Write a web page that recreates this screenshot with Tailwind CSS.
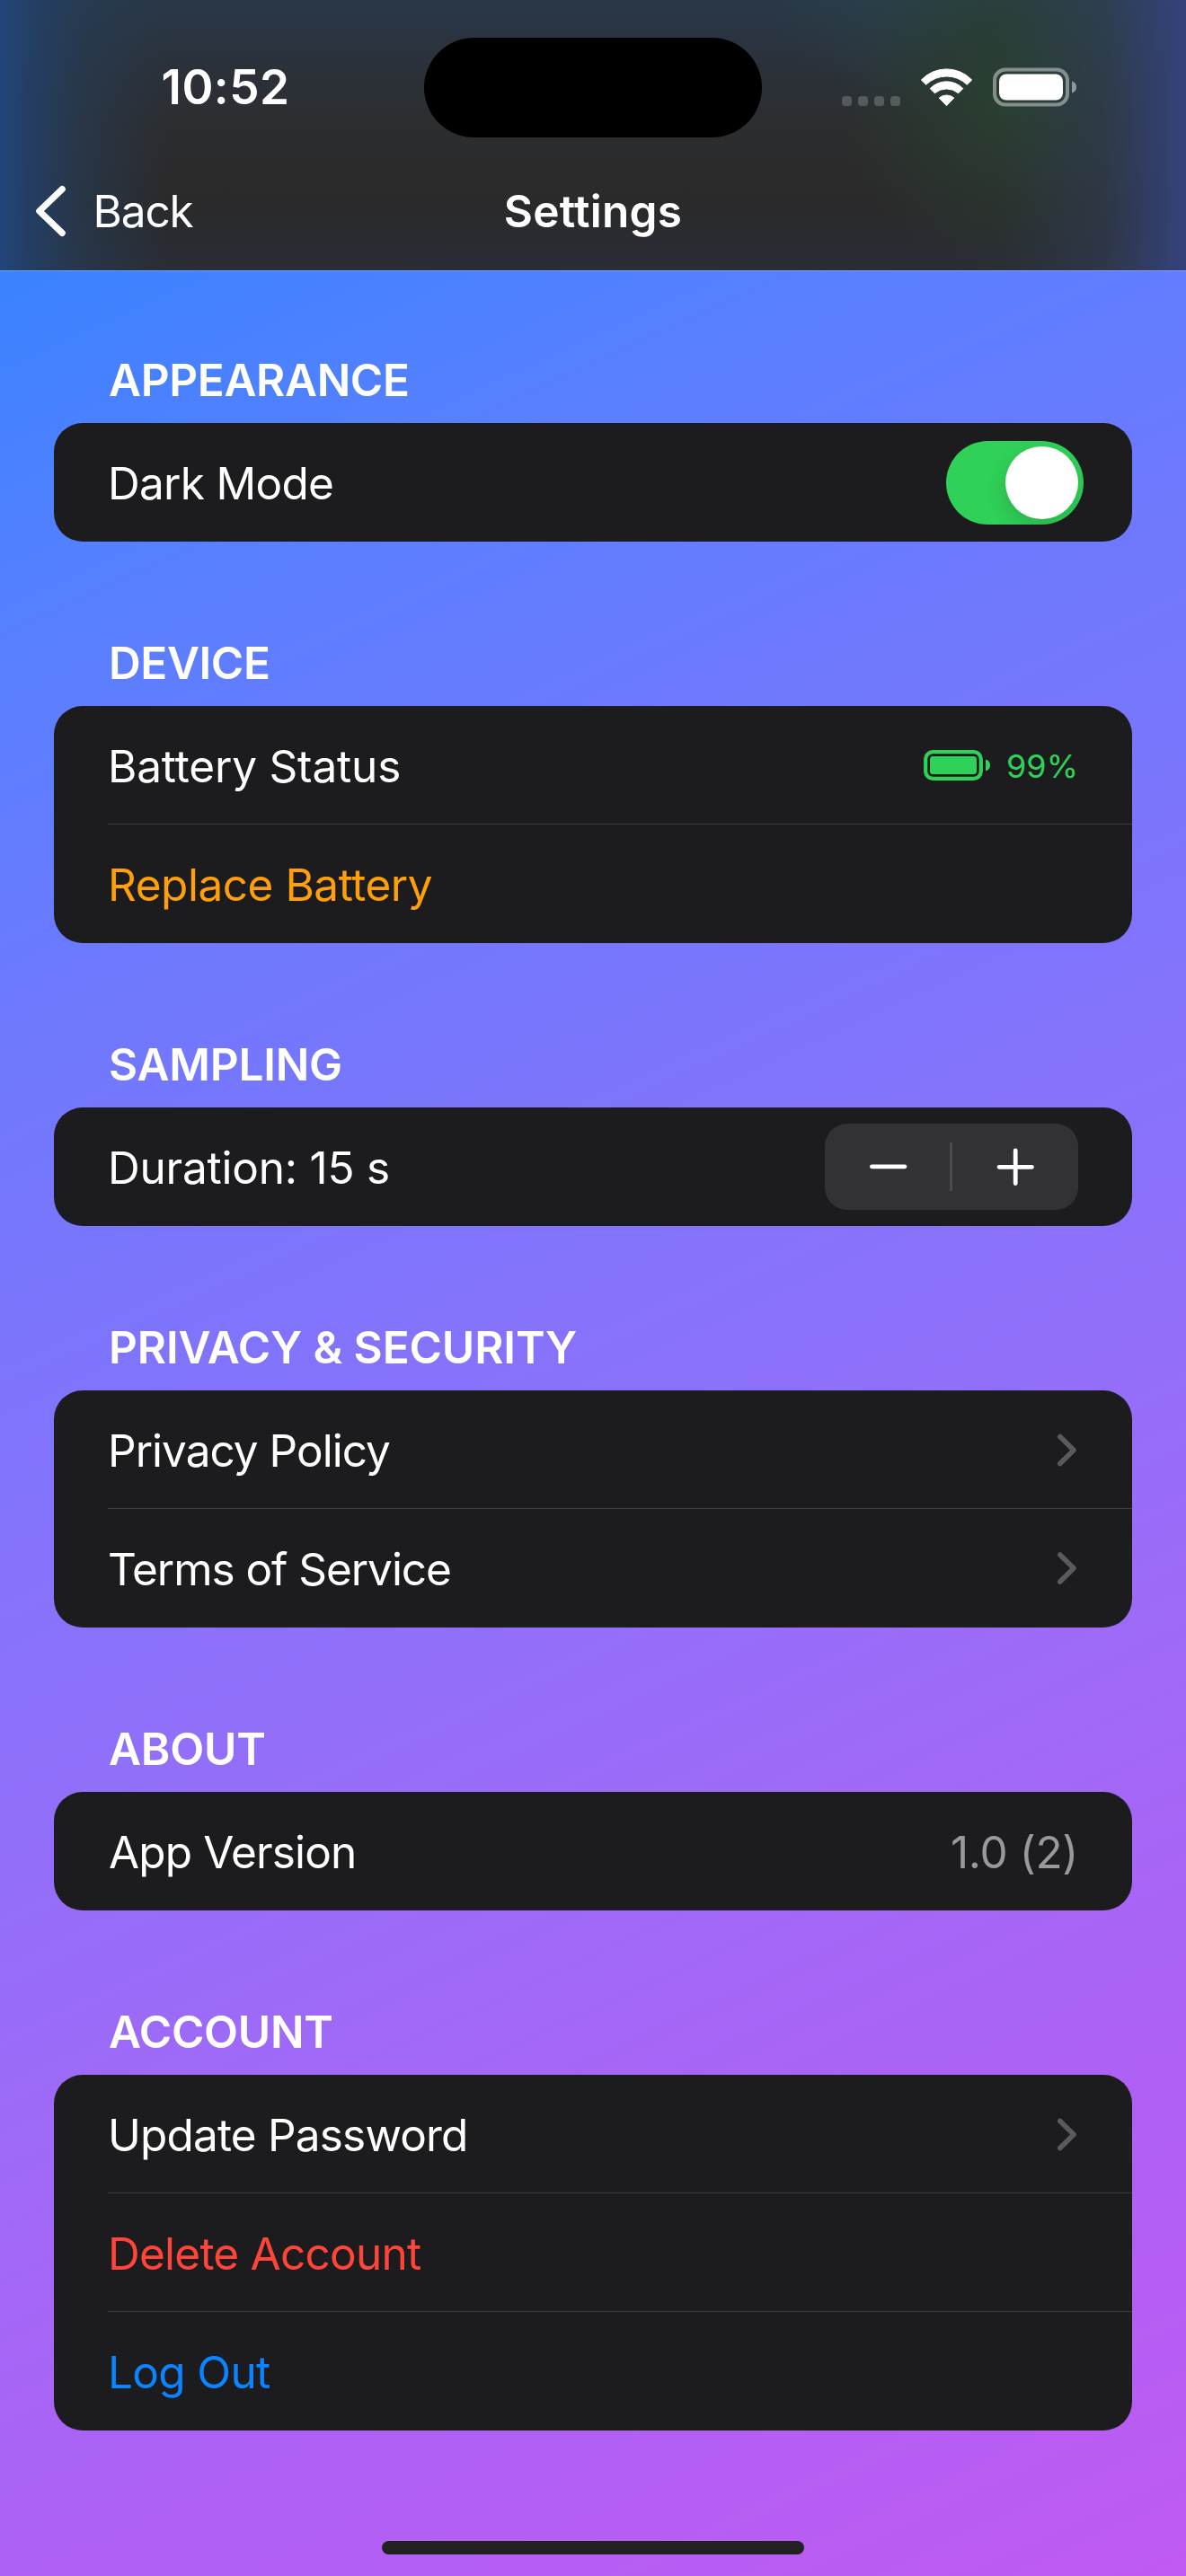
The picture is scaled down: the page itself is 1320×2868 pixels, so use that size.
<!DOCTYPE html>
<html lang="en">
<head>
<meta charset="utf-8">
<title>Settings</title>
<script src="https://cdn.jsdelivr.net/npm/@tailwindcss/browser@4"></script>
</head>
<body class="font-['Inter',sans-serif] text-[49.5px] leading-[60px] text-white">
<div class="flex h-[2868px] w-[1320px] flex-col overflow-hidden bg-[linear-gradient(155.3deg,#0a84ff_0%,#3a82ff_8.7%,#5680ff_20%,#6e79fe_33%,#8c71fa_55%,#a268f7_72%,#ae61f4_83%,#bf5af2_100%)]">

  <header class="h-[302px] shrink-0 border-b border-white/25 bg-[#2b2b2c] bg-clip-padding bg-[linear-gradient(90deg,#22457a_0%,#234068d9_3%,#263c5699_7%,#2b2b2c00_14%,#2b2b2c00_84%,#31405c80_93%,#34427a_100%),radial-gradient(ellipse_190px_200px_at_1125px_105px,#2a4031_0%,#2a3c30b3_40%,#2b2b2c00_100%),radial-gradient(ellipse_260px_130px_at_1110px_0px,#2a474dcc_0%,#2b2b2c00_100%),linear-gradient(180deg,#293848_0%,#2b313a_25%,#2c2d2e_48%,#2a2a2b_75%,#2a2d35_100%)]">
    <!-- Status bar -->
    <div class="grid h-[194px] grid-cols-[472px_376px_1fr] items-center">
      <div class="pl-[179.5px] text-[53px] font-semibold tracking-[0.47px]">10:52</div>
      <div class="h-[111px] rounded-full bg-black"></div>
      <div class="flex items-center pl-[89px]">
        <div class="flex gap-[7px] pt-[30px]">
          <i class="size-[11px] rounded-[3.5px] bg-white/20"></i>
          <i class="size-[11px] rounded-[3.5px] bg-white/20"></i>
          <i class="size-[11px] rounded-[3.5px] bg-white/20"></i>
          <i class="size-[11px] rounded-[3.5px] bg-white/20"></i>
        </div>
        <svg class="ml-[22px] h-[44px] w-[59px]" viewBox="0 0 59 44" fill="#fff" stroke="#fff" stroke-width="1" stroke-linejoin="round">
          <path d="M1.4 14A38.7 38.7 0 0 1 57.6 14L52.3 19.2A32.8 32.8 0 0 0 6.7 19.2Z"/>
          <path d="M11.2 23.6A25.4 25.4 0 0 1 47.8 23.6L42.6 28.8A20 20 0 0 0 16.4 28.8Z"/>
          <path d="M21.2 34A13 13 0 0 1 37.8 34L29.5 42.7Z"/>
        </svg>
        <svg class="ml-[22px] h-[44px] w-[94px]" viewBox="0 0 94 44">
          <rect x="2" y="2.5" width="81" height="39" rx="12" fill="none" stroke="#fff" stroke-opacity=".42" stroke-width="4"/>
          <rect x="7" y="7.5" width="71" height="29" rx="8" fill="#fff"/>
          <path d="M88 15.5C91.5 16.5 93 19 93 22S91.5 27.5 88 28.5Z" fill="#fff" fill-opacity=".48"/>
        </svg>
      </div>
    </div>
    <!-- Navigation bar -->
    <div class="grid h-[82px] grid-cols-[1fr_auto_1fr] items-center">
      <div class="flex items-center pl-[37px]">
        <svg class="h-[60px] w-[40px]" viewBox="0 0 40 60" fill="none" stroke="#fff" stroke-width="7.2" stroke-linecap="round" stroke-linejoin="round"><path d="M32.2 5.6L6.8 30L32.2 54.4"/></svg>
        <span class="pl-[26.5px] tracking-[-1.15px]">Back</span>
      </div>
      <h1 class="font-semibold tracking-[0.28px]">Settings</h1>
      <div></div>
    </div>
  </header>

  <main class="flex flex-col gap-[105px] px-[60px] pt-[91px]">
    <section>
      <h2 class="mb-[18px] pl-[61px] font-semibold tracking-[-0.36px]">APPEARANCE</h2>
      <div class="rounded-[32px] bg-[#1c1c1e]">
        <div class="flex h-[132px] items-center justify-between pr-[54px] pl-[60px]">
          <span class="pt-[2px] tracking-[-0.71px]">Dark Mode</span>
          <div class="flex h-[93px] w-[153px] items-center justify-end overflow-hidden rounded-full bg-[#30d158] pr-[6px]">
            <div class="size-[81px] rounded-full bg-white shadow-[0_9px_24px_rgba(0,0,0,0.16)]"></div>
          </div>
        </div>
      </div>
    </section>

    <section>
      <h2 class="mb-[18px] pl-[61px] font-semibold tracking-[-0.4px]">DEVICE</h2>
      <div class="rounded-[32px] bg-[#1c1c1e] pl-[60px]">
        <div class="flex h-[132px] items-center justify-between border-b border-[#3c3c3f] pr-[60px]">
          <span class="pt-[3px] tracking-[-0.17px]">Battery Status</span>
          <div class="flex items-center text-[#30d158]">
            <svg class="mt-px h-[34px] w-[75px]" viewBox="0 0 75 34" fill="currentColor">
              <rect x="2.2" y="2.2" width="61.6" height="29.6" rx="8" fill="none" stroke="currentColor" stroke-width="4.2"/>
              <rect x="7" y="7" width="52" height="20" rx="3.5"/>
              <path d="M69 10.5C72.5 11.5 74 14 74 17S72.500 22.500 69 23.500Z"/>
            </svg>
            <span class="pt-[2px] pl-[17px] text-[36px]">99%</span>
          </div>
        </div>
        <div class="flex h-[132px] items-center text-[#ff9f0a]"><span class="pt-[2px] tracking-[-0.47px]">Replace Battery</span></div>
      </div>
    </section>

    <section>
      <h2 class="mb-[18px] pl-[61px] font-semibold tracking-[-0.22px]">SAMPLING</h2>
      <div class="rounded-[32px] bg-[#1c1c1e]">
        <div class="flex h-[132px] items-center justify-between px-[60px]">
          <span class="pt-[2px] tracking-[-0.22px]">Duration: 15 s</span>
          <div class="flex h-[96px] w-[282px] items-center rounded-[25px] bg-[#323136]">
            <div class="flex w-[139px] justify-center">
              <svg class="h-[48px] w-[48px]" viewBox="0 0 48 48" stroke="#fff" stroke-width="4.8" stroke-linecap="round"><path d="M6.4 23.8H43"/></svg>
            </div>
            <div class="h-[54px] w-[3px] bg-[#4b4a4f]"></div>
            <div class="flex w-[140px] justify-center">
              <svg class="h-[48px] w-[48px]" viewBox="0 0 48 48" stroke="#fff" stroke-width="4.8" stroke-linecap="round"><path d="M6 24.3H42.5M24.2 6V42.5"/></svg>
            </div>
          </div>
        </div>
      </div>
    </section>

    <section>
      <h2 class="mb-[18px] pl-[61px] font-semibold tracking-[-0.12px]">PRIVACY &amp; SECURITY</h2>
      <div class="rounded-[32px] bg-[#1c1c1e] pl-[60px]">
        <div class="flex h-[132px] items-center justify-between border-b border-[#3c3c3f] pr-[60px]">
          <span class="pt-[3px] tracking-[-0.98px]">Privacy Policy</span>
          <svg class="h-[40px] w-[24px]" viewBox="0 0 24 40" fill="none" stroke="#5a5a5e" stroke-width="5.6" stroke-linecap="round" stroke-linejoin="round"><path d="M3.8 5.5L19 20.5L3.8 35.5"/></svg>
        </div>
        <div class="flex h-[132px] items-center justify-between pr-[60px]">
          <span class="pt-[2px] tracking-[-1.05px]">Terms of Service</span>
          <svg class="h-[40px] w-[24px]" viewBox="0 0 24 40" fill="none" stroke="#5a5a5e" stroke-width="5.6" stroke-linecap="round" stroke-linejoin="round"><path d="M3.8 5L19 20L3.8 35"/></svg>
        </div>
      </div>
    </section>

    <section>
      <h2 class="mb-[18px] pl-[61px] font-semibold tracking-[-0.2px]">ABOUT</h2>
      <div class="rounded-[32px] bg-[#1c1c1e]">
        <div class="flex h-[132px] items-center justify-between px-[60px]">
          <span class="pt-[2px] pl-px tracking-[-0.86px]">App Version</span>
          <span class="pt-[2px] tracking-[-0.37px] text-[#98989f]">1.0 (2)</span>
        </div>
      </div>
    </section>

    <section>
      <h2 class="mb-[18px] pl-[61px] font-semibold tracking-[-0.3px]">ACCOUNT</h2>
      <div class="rounded-[32px] bg-[#1c1c1e] pl-[60px]">
        <div class="flex h-[132px] items-center justify-between border-b border-[#3c3c3f] pr-[60px]">
          <span class="pt-[3px] tracking-[-0.82px]">Update Password</span>
          <svg class="h-[40px] w-[24px]" viewBox="0 0 24 40" fill="none" stroke="#5a5a5e" stroke-width="5.6" stroke-linecap="round" stroke-linejoin="round"><path d="M3.8 5.5L19 20.5L3.8 35.5"/></svg>
        </div>
        <div class="flex h-[132px] items-center border-b border-[#3c3c3f] text-[#ff453a]"><span class="pt-[3px] tracking-[-0.76px]">Delete Account</span></div>
        <div class="flex h-[132px] items-center text-[#0a84ff]"><span class="pt-[2px] tracking-[-0.68px]">Log Out</span></div>
      </div>
    </section>
  </main>

  <div class="mx-auto mt-auto mb-[24px] h-[15px] w-[470px] shrink-0 rounded-full bg-[#222222]"></div>
</div>
</body>
</html>
